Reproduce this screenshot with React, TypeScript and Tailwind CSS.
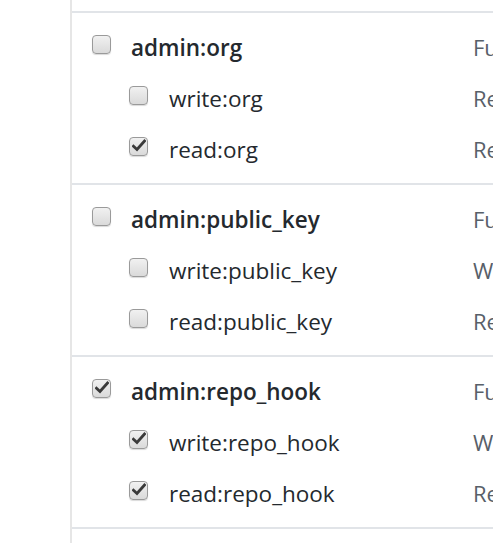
import React from 'react';

type Scope = {
  name: string;
  description: string;
  checked: boolean;
  children: { name: string; description: string; checked: boolean }[];
};

const scopes: Scope[] = [
  {
    name: 'admin:org',
    description: 'Full control of orgs and teams, read and write org projects',
    checked: false,
    children: [
      { name: 'write:org', description: 'Read and write org and team membership, read and write org projects', checked: false },
      { name: 'read:org', description: 'Read org and team membership, read org projects', checked: true },
    ],
  },
  {
    name: 'admin:public_key',
    description: 'Full control of user public keys',
    checked: false,
    children: [
      { name: 'write:public_key', description: 'Write user public keys', checked: false },
      { name: 'read:public_key', description: 'Read user public keys', checked: false },
    ],
  },
  {
    name: 'admin:repo_hook',
    description: 'Full control of repository hooks',
    checked: true,
    children: [
      { name: 'write:repo_hook', description: 'Write repository hooks', checked: true },
      { name: 'read:repo_hook', description: 'Read repository hooks', checked: true },
    ],
  },
];

function Checkbox({ checked }: { checked: boolean }) {
  return (
    <span className="relative flex h-[19px] w-[19px] shrink-0 items-center justify-center rounded-[4px] border border-[#9a9a9a] bg-gradient-to-b from-[#f1f1f1] to-[#dadada] shadow-[0_1px_1px_rgba(0,0,0,0.15)]">
      {checked && (
        <svg width="14" height="13" viewBox="0 0 14 13" className="-mt-[1px]">
          <path d="M1.5 7.2 L5 10.5 L12.5 2" fill="none" stroke="#3a3a3a" strokeWidth="2.8" strokeLinecap="square" />
        </svg>
      )}
    </span>
  );
}

function Row({ name, description, checked, child }: { name: string; description: string; checked: boolean; child?: boolean }) {
  return (
    <div className="flex h-[51px] items-center">
      <div className={`flex w-[401px] shrink-0 items-center ${child ? 'pl-[57px]' : 'pl-[20px]'}`}>
        <span className="-mt-[9px]">
          <Checkbox checked={checked} />
        </span>
        <span
          className={`-mt-[2px] whitespace-nowrap text-[#24292e] ${
            child ? 'ml-[21px] text-[22.5px] font-normal' : 'ml-[20px] text-[22.5px] font-semibold'
          }`}
        >
          {name}
        </span>
      </div>
      <span className="-mt-[2px] whitespace-nowrap text-[22px] text-[#586069]">{description}</span>
    </div>
  );
}

export default function App() {
  return (
    <div className="h-[543px] w-[493px] overflow-hidden bg-white font-['Open_Sans',sans-serif]">
      <div className="ml-[70px] h-full border-l-2 border-[#e6e6e6]">
        <div className="h-[11px]" />
        {scopes.map((scope) => (
          <div key={scope.name} className="border-t-2 border-[#e1e4e8] pb-[7px] pt-[10px]">
            <Row name={scope.name} description={scope.description} checked={scope.checked} />
            {scope.children.map((c) => (
              <Row key={c.name} name={c.name} description={c.description} checked={c.checked} child />
            ))}
          </div>
        ))}
        <div className="border-t-2 border-[#e1e4e8]" />
      </div>
    </div>
  );
}
